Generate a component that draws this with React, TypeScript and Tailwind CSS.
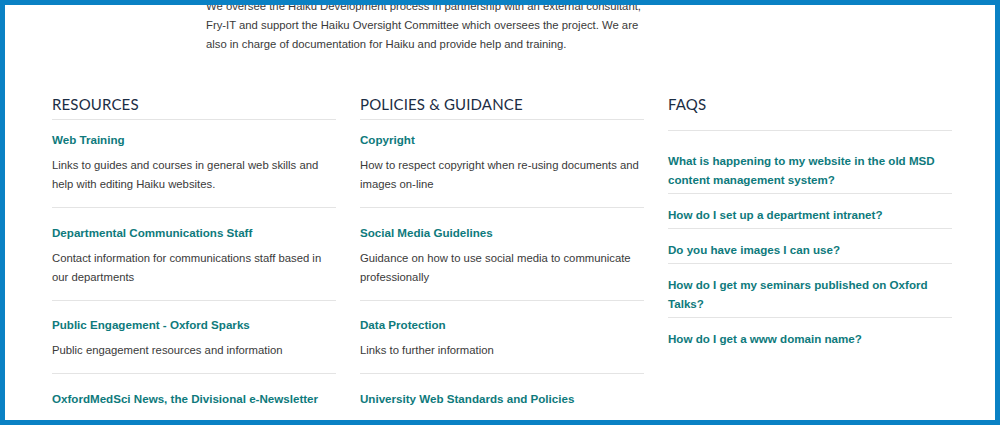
import React from "react";

type Item = { title: string; desc: string };

const resources: Item[] = [
  {
    title: "Web Training",
    desc: "Links to guides and courses in general web skills and help with editing Haiku websites.",
  },
  {
    title: "Departmental Communications Staff",
    desc: "Contact information for communications staff based in our departments",
  },
  {
    title: "Public Engagement - Oxford Sparks",
    desc: "Public engagement resources and information",
  },
  {
    title: "OxfordMedSci News, the Divisional e-Newsletter",
    desc: "Sign up to the newsletter and read the latest edition",
  },
];

const policies: Item[] = [
  {
    title: "Copyright",
    desc: "How to respect copyright when re-using documents and images on-line",
  },
  {
    title: "Social Media Guidelines",
    desc: "Guidance on how to use social media to communicate professionally",
  },
  { title: "Data Protection", desc: "Links to further information" },
  {
    title: "University Web Standards and Policies",
    desc: "Links to the University's web standards, guidelines and policies",
  },
];

const faqs = [
  "What is happening to my website in the old MSD content management system?",
  "How do I set up a department intranet?",
  "Do you have images I can use?",
  "How do I get my seminars published on Oxford Talks?",
  "How do I get a www domain name?",
];

const body = "font-['Liberation_Sans',Arial,sans-serif]";
const heading =
  "font-['Lato','Open_Sans',sans-serif] text-[15px] leading-[20px] text-[#1b2d44] tracking-[0.15px]";

function Section({ title, items }: { title: string; items: Item[] }) {
  return (
    <section>
      <h2 className={`${heading} pb-[5px] border-b border-[#e4e4e4]`}>{title}</h2>
      <ul>
        {items.map((it, i) => (
          <li
            key={it.title}
            className={`${i === 0 ? "pt-[10px]" : "pt-[14.5px]"} pb-[13px] border-b border-[#e4e4e4]`}
          >
            <a className="block text-[11.6px] leading-[19px] font-bold text-[#0e7a7c]">
              {it.title}
            </a>
            <p className="mt-[7px] text-[11.3px] leading-[19px] text-[#3a3a3a]">{it.desc}</p>
          </li>
        ))}
      </ul>
    </section>
  );
}

export default function App() {
  return (
    <div className={`relative h-[425px] w-[1000px] overflow-hidden bg-white ${body}`}>
      <div className="-mt-[3px] pl-[52px]">
        <p className="ml-[154px] w-[440px] text-[11.3px] leading-[19px] text-[#3a3a3a]">
          We oversee the Haiku Development process in partnership with an external consultant,
          Fry-IT and support the Haiku Oversight Committee which oversees the project. We are
          also in charge of documentation for Haiku and provide help and training.
        </p>
        <div className="mt-[40px] grid w-[900px] grid-cols-3 gap-x-[24px]">
          <Section title="RESOURCES" items={resources} />
          <Section title="POLICIES & GUIDANCE" items={policies} />
          <section>
            <h2 className={`${heading} pb-[16px] border-b border-[#e4e4e4]`}>FAQS</h2>
            <ul className="mt-[9px]">
              {faqs.map((q, i) => (
                <li
                  key={q}
                  className={`pt-[10.5px] pb-[4.5px] ${
                    i < faqs.length - 1 ? "border-b border-[#e4e4e4]" : ""
                  }`}
                >
                  <a className="block text-[11.6px] leading-[19px] font-bold text-[#0e7a7c]">
                    {q}
                  </a>
                </li>
              ))}
            </ul>
          </section>
        </div>
      </div>
      <div className="pointer-events-none absolute inset-0 border-[5px] border-[#0a81c4]" />
    </div>
  );
}
